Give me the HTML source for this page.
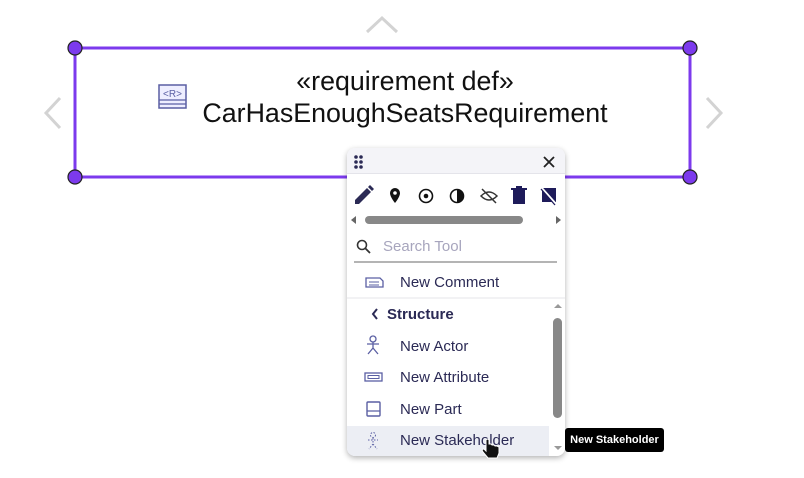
<!DOCTYPE html>
<html><head><style>
body{margin:0;width:804px;height:478px;background:#fff;position:relative;overflow:hidden;font-family:"Liberation Sans",Roboto,sans-serif}
.abs{position:absolute}
.t{color:#2b2a55;font-size:15px}
</style></head><body>
<svg class="abs" style="left:0;top:0" width="804" height="478">
<polyline points="367,32 382,18 397,32" fill="none" stroke="#d3d3d3" stroke-width="3"/>
<polyline points="60,98 46,113 60,128" fill="none" stroke="#d3d3d3" stroke-width="3"/>
<polyline points="707,98 721,113 707,128" fill="none" stroke="#d3d3d3" stroke-width="3"/>
<rect x="75" y="48" width="615" height="129" fill="none" stroke="#7c3aed" stroke-width="3"/>
<g fill="#7c3aed" stroke="#222" stroke-width="1.2">
<circle cx="75" cy="48" r="7"/><circle cx="690" cy="48" r="7"/><circle cx="75" cy="177" r="7"/><circle cx="690" cy="177" r="7"/></g>
<rect x="159" y="85" width="27" height="23" fill="#eef" stroke="#5a5fa3" stroke-width="1.5"/>
<line x1="159" y1="100" x2="186" y2="100" stroke="#5a5fa3" stroke-width="1.2"/>
<line x1="159" y1="104" x2="186" y2="104" stroke="#5a5fa3" stroke-width="1.2"/>
<text x="172.5" y="97" font-size="10" text-anchor="middle" fill="#5a5fa3" font-family="Liberation Sans">&lt;R&gt;</text>
</svg>
<div class="abs" style="left:180px;top:65px;width:450px;text-align:center;font-size:26.8px;color:#111;line-height:32px">«requirement def»<br>CarHasEnoughSeatsRequirement</div>

<div class="abs" style="left:347px;top:148px;width:218px;height:308px;background:#fff;border-radius:8px;box-shadow:0 2px 6px rgba(0,0,0,.3);overflow:hidden">
<div style="height:25px;background:#f4f4f8;border-bottom:1px solid #e4e4ea"></div>
<svg class="abs" style="left:0;top:0" width="218" height="308">
<g fill="#2b2a55"><circle cx="9" cy="9" r="1.8"/><circle cx="14" cy="9" r="1.8"/><circle cx="9" cy="14" r="1.8"/><circle cx="14" cy="14" r="1.8"/><circle cx="9" cy="19" r="1.8"/><circle cx="14" cy="19" r="1.8"/></g>
<path d="M197 9 L207 19 M207 9 L197 19" stroke="#222" stroke-width="1.8"/>
<path d="M8 56 L8 52 L20 40 L24 44 L12 56 Z M21 39 L23 37 L27 41 L25 43Z" fill="#2b2a55"/>
<path d="M48 40 a5 5 0 0 1 5 5 c0 4 -5 10 -5 10 c0 0 -5 -6 -5 -10 a5 5 0 0 1 5 -5z" fill="#111"/><circle cx="48" cy="45" r="1.8" fill="#fff"/>
<circle cx="79" cy="48" r="6.5" fill="none" stroke="#111" stroke-width="1.6"/><circle cx="79" cy="48" r="2.3" fill="#111"/>
<circle cx="110" cy="48" r="6.5" fill="none" stroke="#111" stroke-width="1.6"/><path d="M110 41.5 a6.5 6.5 0 0 1 0 13z" fill="#111"/>
<path d="M134 48 q8 -8 16 0 q-8 8 -16 0z" fill="none" stroke="#333" stroke-width="1.5"/><line x1="135" y1="41" x2="149" y2="55" stroke="#333" stroke-width="1.5"/>
<path d="M166 42 h12 v14 h-12z M164 40 h16 v2 h-16z M169 38 h6 v2 h-6z" fill="#1e1b5a"/>
<path d="M195 40 h14 v14 h-14z" fill="#1e1b5a"/><line x1="194" y1="39" x2="210" y2="57" stroke="#fff" stroke-width="2"/><line x1="194" y1="41" x2="208" y2="57" stroke="#1e1b5a" stroke-width="1.3"/>
<path d="M4 72 l5 -4 v8z M214 72 l-5 -4 v8z" fill="#666"/>
<rect x="18" y="68" width="158" height="8" rx="4" fill="#888"/>
<line x1="7" y1="114" x2="210" y2="114" stroke="#888" stroke-width="1.2"/>
<circle cx="15" cy="97" r="4.5" fill="none" stroke="#333" stroke-width="1.6"/><line x1="18.5" y1="100.5" x2="23" y2="105" stroke="#333" stroke-width="1.8"/>
<path d="M19 130 h14 l3 3 v6 h-17z" fill="none" stroke="#5a5fa3" stroke-width="1.3"/><path d="M22 134 h10 M22 137 h10" stroke="#5a5fa3"/>
<line x1="0" y1="150" x2="218" y2="150" stroke="#e6e6ea"/>
<polyline points="30,161 26,166 30,171" fill="none" stroke="#2b2a55" stroke-width="2"/>
<circle cx="26" cy="191" r="3" fill="none" stroke="#5a5fa3" stroke-width="1.3"/><path d="M26 194 v6 M20 196 h12 M26 200 l-5 6 M26 200 l5 6" stroke="#5a5fa3" stroke-width="1.3" fill="none"/>
<rect x="18" y="225" width="17" height="8" fill="none" stroke="#5a5fa3" stroke-width="1.3"/><rect x="21" y="227.5" width="11" height="3" fill="none" stroke="#5a5fa3"/>
<rect x="20" y="254" width="13" height="14" rx="1" fill="none" stroke="#5a5fa3" stroke-width="1.4"/><line x1="20" y1="263" x2="33" y2="263" stroke="#5a5fa3" stroke-width="1.3"/>
<rect x="0" y="278" width="202" height="30" fill="#eceef4"/>
<circle cx="26" cy="287" r="2.5" fill="none" stroke="#5a5fa3" stroke-dasharray="1.5 1.5"/><path d="M26 290 v6 M21 292 h10 M26 296 l-4 5 M26 296 l4 5" stroke="#5a5fa3" stroke-dasharray="1.5 1.5" fill="none"/>
<path d="M207 160 l4 -4 l4 4z M207 298 l4 4 l4 -4z" fill="#999"/>
<rect x="206" y="170" width="9" height="100" rx="4.5" fill="#888"/>
</svg>
<div class="abs" style="left:36px;top:90px;font-size:15px;color:#a7a5bd">Search Tool</div>
<div class="abs t" style="left:53px;top:126px">New Comment</div>
<div class="abs t" style="left:40px;top:158px;font-weight:bold">Structure</div>
<div class="abs t" style="left:53px;top:190px">New Actor</div>
<div class="abs t" style="left:53px;top:221px">New Attribute</div>
<div class="abs t" style="left:53px;top:253px">New Part</div>
<div class="abs t" style="left:53px;top:284px">New Stakeholder</div>
</div>
<svg class="abs" style="left:480px;top:438px" width="22" height="24"><path d="M6 2 v11 l-2 -2 q-3 0 -1 3 l5 6 h9 l2 -5 v-6 l-2 -1 l-2 0 l-1 -1 h-2 l-1 -1 h-2 v-4 q-1.5 -2 -3 0z" fill="#111" stroke="#fff" stroke-width="1"/></svg>
<div class="abs" style="left:565px;top:428px;width:99px;height:24px;background:#000;border-radius:3px;color:#fff;font-size:11px;font-weight:bold;line-height:24px;text-align:center">New Stakeholder</div>
</body></html>
